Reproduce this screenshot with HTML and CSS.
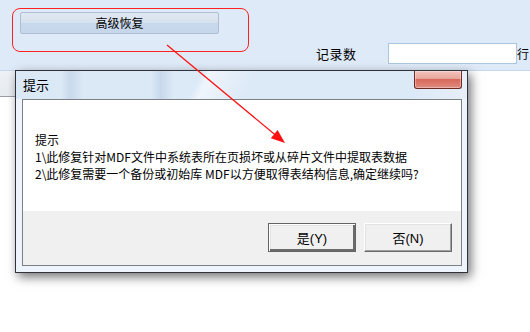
FILE: index.html
```html
<!DOCTYPE html>
<html>
<head>
<meta charset="utf-8">
<link rel="stylesheet" href="styles.css">
</head>
<body>
<div class="top">
  <div class="group">
    <button class="adv-btn">高级恢复</button>
  </div>
  <div class="count">
    <span class="count-label">记录数</span>
    <input class="count-input" type="text">
    <span class="count-unit">行</span>
  </div>
</div>
<div class="main">
  <div class="grid-head"></div>
</div>

<div class="dialog">
  <div class="titlebar">
    <span class="title">提示</span>
    <span class="close"></span>
  </div>
  <div class="client">
    <div class="msg">
      <p>提示</p>
      <p>1\此修复针对MDF文件中系统表所在页损坏或从碎片文件中提取表数据</p>
      <p>2\此修复需要一个备份或初始库 MDF以方便取得表结构信息,确定继续吗?</p>
    </div>
    <div class="actions">
      <button class="btn default">是(Y)</button>
      <button class="btn">否(N)</button>
    </div>
  </div>
</div>

<svg class="arrow" width="530" height="332" viewBox="0 0 530 332">
  <line x1="167" y1="45" x2="276" y2="135.5" stroke="#ff1010" stroke-width="1.2"/>
  <polygon points="285,143 270.8,138.2 277.6,130.1" fill="#ff1010"/>
</svg>
</body>
</html>
```

FILE: styles.css
```css
html, body {
  margin: 0;
  padding: 0;
}
body {
  width: 530px;
  height: 332px;
  overflow: hidden;
  background: #ffffff;
  font-family: "Noto Sans CJK SC", "Noto Sans", sans-serif;
  font-size: 12px;
  color: #000;
  position: relative;
}
.top {
  height: 70px;
  background: #dfeaf8;
  border-bottom: 1px solid #c4d7ee;
  display: flex;
  align-items: flex-start;
}
.group {
  margin: 8px 0 0 12px;
  width: 228px;
  height: 39px;
  border: 1px solid #ff2020;
  border-radius: 8px;
  padding: 3px 0 0 7px;
  box-sizing: content-box;
  flex: none;
}
.adv-btn {
  display: block;
  width: 199px;
  height: 22px;
  margin: 0;
  padding: 0;
  border: 1px solid #aebfd3;
  border-radius: 2px;
  background: linear-gradient(#e0e8f2 0%, #d6e1ee 50%, #c8d8ec 51%, #c6d7ec 100%);
  font-family: "Noto Sans CJK SC", sans-serif;
  font-size: 12px;
  line-height: 20px;
  color: #000;
}
.count {
  display: flex;
  align-items: center;
  margin: 43px 0 0 67px;
  height: 21px;
  flex: none;
}
.count-label {
  font-size: 13px;
  letter-spacing: 0.5px;
  width: 72px;
}
.count-input {
  width: 129px;
  height: 21px;
  box-sizing: border-box;
  border: 1px solid #aac6e0;
  background: #fff;
  margin: 0;
  padding: 0;
}
.count-unit {
  font-size: 12px;
  margin-left: 0;
}
.main {
  height: 261px;
}
.grid-head {
  width: 15px;
  height: 25px;
  background: linear-gradient(#eef2f6, #e6ebf0);
  border-bottom: 1px solid #9a9fa6;
}

/* dialog overlay */
.dialog {
  position: absolute;
  left: 15px;
  top: 70px;
  width: 453px;
  height: 203px;
  box-sizing: border-box;
  border: 1px solid #2f3339;
  background: #eef4fb;
  padding: 0 5px 6px 6px;
  display: flex;
  flex-direction: column;
  box-shadow: 3px 4px 10px rgba(0, 0, 0, 0.55);
}
.titlebar {
  height: 28px;
  flex: none;
  margin: 0 -5px 0 -6px;
  padding: 0 5px 0 7px;
  display: flex;
  align-items: flex-start;
  justify-content: space-between;
  background:
    linear-gradient(115deg, transparent 40%, rgba(255,255,255,0.55) 42%, transparent 52%),
    linear-gradient(90deg, #dbe8f6 0%, #dbe8f6 10%, #c9d9ec 12%, #dbe8f6 15%, #dbe8f6 30%, #c8d8eb 32%, #dce9f7 35%, #dce9f7 88%, #e8eff7 100%);
}
.title {
  font-size: 13px;
  line-height: 28px;
  padding-top: 0;
}
.close {
  width: 46px;
  height: 17px;
  border: 1px solid #6e2a24;
  border-top: none;
  border-radius: 0 0 3px 3px;
  background: linear-gradient(#f0c3bb 0%, #e7a59a 45%, #d7685b 50%, #e08c80 100%);
  box-shadow: inset 0 0 0 1px rgba(255,255,255,0.35);
}
.client {
  flex: 1;
  border: 1px solid #7d8186;
  background: #f0f0f0;
  display: flex;
  flex-direction: column;
}
.msg {
  height: 111px;
  background: #fff;
  padding: 31px 0 0 12px;
  box-sizing: border-box;
}
.msg p {
  margin: 0;
  line-height: 17px;
  white-space: nowrap;
}
.actions {
  display: flex;
  justify-content: flex-end;
  gap: 8px;
  padding: 12px 9px 0 0;
}
.btn {
  width: 88px;
  height: 29px;
  margin: 0;
  padding: 0;
  background: #f0f0f0;
  border: 1px solid;
  border-color: #ffffff #6a6a6a #6a6a6a #ffffff;
  box-shadow: inset -1px -1px 0 #a0a0a0, inset 1px 1px 0 #e3e3e3;
  font-family: "Liberation Sans", "Noto Sans CJK SC", sans-serif;
  font-size: 13px;
  color: #000;
}
.btn.default {
  border: 1px solid #646464;
  box-shadow: inset 1px 1px 0 #ffffff, inset -2px -2px 0 #6a6a6a, inset 2px 2px 0 #e3e3e3;
}
.arrow {
  position: absolute;
  left: 0;
  top: 0;
  pointer-events: none;
}
```
